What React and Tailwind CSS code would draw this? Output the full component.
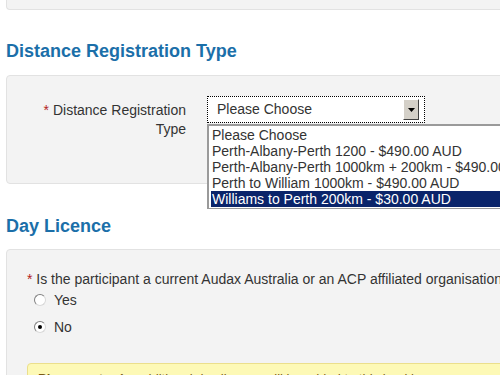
import React from 'react';

const options = [
  'Please Choose',
  'Perth-Albany-Perth 1200 - $490.00 AUD',
  'Perth-Albany-Perth 1000km + 200km - $490.00 AUD',
  'Perth to William 1000km - $490.00 AUD',
  'Williams to Perth 200km - $30.00 AUD',
];

const Radio = ({ checked, label }) => (
  <div className="flex items-center h-[20px]">
    <span className="w-[12px] h-[12px] ml-[27px] rounded-full border border-[#7f7f7f] border-r-[#d8d8d8] border-b-[#d8d8d8] bg-white flex items-center justify-center">
      {checked && <span className="w-[4px] h-[4px] rounded-full bg-black" />}
    </span>
    <span className="ml-[8px] text-[14px] leading-[20px] text-[#333]">{label}</span>
  </div>
);

const App = () => {
  return (
    <div className="w-[500px] h-[375px] overflow-hidden bg-white font-['Liberation_Sans',Arial,sans-serif]">
      <div className="w-[560px] pl-[6px]">
        {/* panel above, mostly scrolled off */}
        <div className="h-[10px] bg-[#f3f3f3] border-l border-b border-[#e2e2e2] rounded-bl-[4px]" />

        <h2 className="mt-[29px] text-[18px] leading-[24px] font-bold text-[#1b6fa9]">Distance Registration Type</h2>

        <div className="mt-[12px] h-[109px] bg-[#f3f3f3] border border-[#e2e2e2] rounded-[4px] pt-[20px] flex">
          <div className="w-[146px] ml-[33px] pt-[5px] text-right text-[14px] leading-[19px] text-[#333]">
            <span className="text-[#b22222]">*</span> Distance Registration Type
          </div>
          <div className="relative ml-[21px]">
            <div className="w-[218px] h-[27px] border border-dotted border-black bg-white flex items-center justify-between pl-[9px] pr-[5px]">
              <span className="text-[14px] text-[#333]">Please Choose</span>
              <span className="w-[16px] h-[21px] bg-[#d4d0c8] border border-t-white border-l-white border-r-[#404040] border-b-[#404040] flex items-center justify-center">
                <svg width="7" height="4" viewBox="0 0 7 4">
                  <path d="M0 0h7L3.5 4z" fill="#000" />
                </svg>
              </span>
            </div>
            <div className="absolute z-10 left-0 top-[28px] w-[320px] bg-white border-l-2 border-t-2 border-b border-[#9a9a9a] py-[1px] pl-[2px]">
              {options.map((o, i) => (
                <div
                  key={o}
                  className={
                    i === 4
                      ? 'h-[16px] leading-[16px] text-[14px] whitespace-nowrap pl-[1px] bg-[#0a246a] text-white'
                      : 'h-[16px] leading-[16px] text-[14px] whitespace-nowrap pl-[1px] text-[#333]'
                  }
                >
                  {o}
                </div>
              ))}
            </div>
          </div>
        </div>

        <h2 className="mt-[30px] text-[18px] leading-[24px] font-bold text-[#1b6fa9]">Day Licence</h2>

        <div className="mt-[11px] h-[200px] bg-[#f3f3f3] border border-[#e2e2e2] rounded-[4px] pt-[19px]">
          <p className="pl-[20px] text-[14px] leading-[20px] text-[#333] whitespace-nowrap">
            <span className="text-[#b22222]">*</span> Is the participant a current Audax Australia or an ACP affiliated organisation member?
          </p>
          <div className="mt-[1px]">
            <Radio label="Yes" />
          </div>
          <div className="mt-[7px]">
            <Radio checked label="No" />
          </div>
          <div className="ml-[20px] mt-[26px] bg-[#fdf9b6] border border-[#ebdf8c] rounded-[4px] px-[10px] py-[6px] text-[13px] leading-[18px] text-[#7a5a14] whitespace-nowrap">
            <b>Please note:</b> An additional day licence will be added to this booking.
          </div>
        </div>
      </div>
    </div>
  );
};

export default App;
